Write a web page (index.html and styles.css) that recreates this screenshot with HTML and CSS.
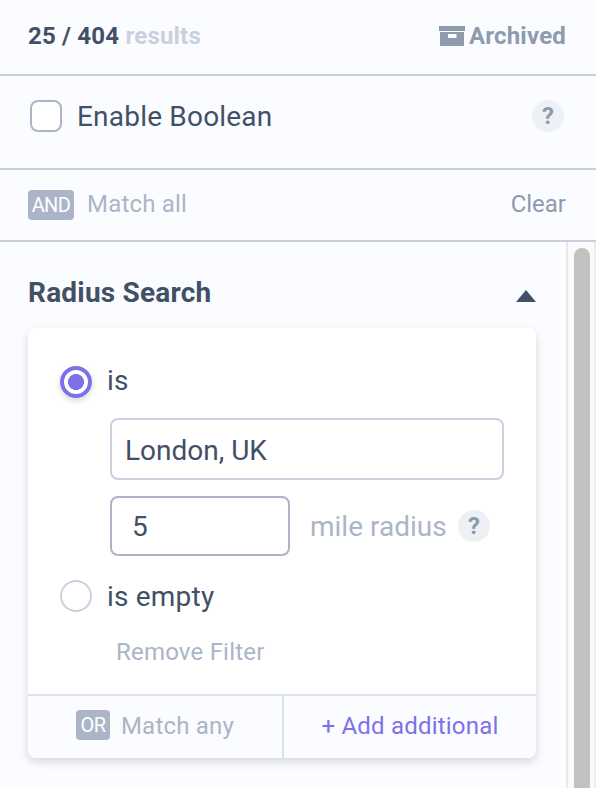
FILE: index.html
```html
<!DOCTYPE html>
<html lang="en">
<head>
    <meta charset="UTF-8">
    <meta name="viewport" content="width=device-width, initial-scale=1.0">
    <title>Radius Search</title>
    <link rel="stylesheet" href="styles.css">
</head>

<body>

    <header class="results-bar">
        <div class="count">25 / 404 <span>results</span></div>
        <div class="archived">
            <svg width="26" height="20" viewBox="0 0 26 20">
                <path d="M0 0h26v5H0z"/>
                <path fill-rule="evenodd" d="M1 6h24v14H1zM9 8v4h8.5V8z"/>
            </svg>
            <span class="archived-text">Archived</span>
        </div>
    </header>

    <section class="boolean-bar">
        <div class="checkbox"></div>
        <div class="label boolean-label">Enable Boolean</div>
        <div class="help">?</div>
    </section>

    <section class="match-bar">
        <div class="badge and">AND</div>
        <div class="match-text">Match all</div>
        <div class="clear">Clear</div>
    </section>

    <main>
        <div class="content">
            <div class="title">
                <h2>Radius Search</h2>
                <svg width="20" height="12" viewBox="0 0 20 12"><path d="M10 0l10 12H0z"/></svg>
            </div>

            <div class="card">
                <div class="filter">
                    <div class="option">
                        <div class="radio checked"></div>
                        <div class="label is">is</div>
                    </div>
                    <div class="input place">London, UK</div>
                    <div class="radius-row">
                        <div class="input miles">5</div>
                        <div class="miles-text">mile radius</div>
                        <div class="help">?</div>
                    </div>
                    <div class="option empty">
                        <div class="radio"></div>
                        <div class="label">is empty</div>
                    </div>
                    <div class="remove">Remove Filter</div>
                </div>
                <div class="card-footer">
                    <div class="any">
                        <div class="badge or">OR</div>
                        <div class="any-text">Match any</div>
                    </div>
                    <div class="add">+ Add additional</div>
                </div>
            </div>
        </div>
        <div class="scrollbar">
            <div class="thumb"></div>
        </div>
    </main>

</body>
</html>
```
FILE: styles.css
```css
* {
    margin: 0;
    padding: 0;
    box-sizing: border-box;
}

body {
    display: flex;
    flex-direction: column;
    height: 788px;
    overflow: hidden;
    background-color: #fbfcff;
    color: #425066;
    font-family: Roboto, "Liberation Sans", sans-serif;
    font-size: 24px;
    letter-spacing: 0.2px;
    white-space: nowrap;
}

.results-bar,
.boolean-bar,
.match-bar {
    display: flex;
    align-items: center;
    flex-shrink: 0;
    border-bottom: 2px solid #c8d0de;
}

/* results */
.results-bar {
    justify-content: space-between;
    height: 76px;
    padding: 0 30px 3px 28px;
    font-weight: bold;
}

.count span {
    color: #c8d1de;
}

.archived {
    display: flex;
    align-items: center;
    gap: 4px;
    color: #8e9aae;
}

.archived svg {
    fill: #8e9aae;
}

/* boolean */
.boolean-bar {
    height: 94px;
    padding: 0 32px 12px 30px;
}

.checkbox {
    width: 32px;
    height: 32px;
    border: 2px solid #abb5c7;
    border-radius: 8px;
    background-color: #fff;
}

.label {
    margin-left: 15px;
    font-size: 28px;
}

.help {
    width: 32px;
    height: 32px;
    border-radius: 50%;
    background-color: #edf1f6;
    color: #8e9aae;
    font-size: 24px;
    font-weight: bold;
    line-height: 32px;
    text-align: center;
}

.boolean-bar .help {
    margin-left: auto;
}

/* match */
.match-bar {
    height: 72px;
    padding: 0 30px 2px 28px;
    color: #abb5c7;
}

.badge {
    height: 30px;
    border-radius: 4px;
    background-color: #abb5c7;
    color: #fff;
    font-size: 20px;
    line-height: 31px;
    letter-spacing: -0.6px;
    text-align: center;
}

.and {
    width: 46px;
    margin-top: 2px;
}

.match-text {
    margin-left: 13px;
}

.clear {
    margin-left: auto;
    color: #8e9aae;
    letter-spacing: 0;
}

/* filters */
main {
    display: flex;
    flex: 1;
}

.content {
    width: 566px;
    padding: 34px 30px 0 28px;
}

.title {
    display: flex;
    justify-content: space-between;
    height: 52px;
}

h2 {
    font-size: 28px;
    line-height: 34px;
}

.title svg {
    margin-top: 14px;
    fill: #425066;
}

.card {
    display: flex;
    flex-direction: column;
    width: 508px;
    height: 430px;
    border-radius: 8px;
    background-color: #fff;
    box-shadow: 0 4px 10px rgba(0, 0, 0, 0.15);
    overflow: hidden;
}

.filter {
    height: 366px;
    padding: 38px 32px 0;
}

.option {
    display: flex;
    align-items: center;
    height: 32px;
}

.radio {
    width: 32px;
    height: 32px;
    border: 2px solid #c8d1de;
    border-radius: 50%;
}

.checked {
    border: 4px solid #7c71e8;
    background: radial-gradient(circle, #7c71e8 7.7px, #fff 8.3px);
    box-shadow: 0 3px 6px rgba(0, 0, 0, 0.15);
}

.is {
    margin-bottom: 4px;
}

.input {
    border: 2px solid #c8d1de;
    border-radius: 8px;
    font-size: 28px;
}

.place {
    width: 394px;
    height: 62px;
    margin: 20px 0 16px 50px;
    padding-left: 13px;
    line-height: 61px;
    letter-spacing: 0;
}

.radius-row {
    display: flex;
    align-items: center;
    margin-left: 50px;
}

.miles {
    width: 180px;
    height: 60px;
    padding-left: 20px;
    border-color: #abb5c7;
    line-height: 57px;
}

.miles-text {
    width: 148px;
    padding-left: 20px;
    box-sizing: content-box;
    color: #abb5c7;
    font-size: 28px;
    letter-spacing: 0;
}

.empty {
    margin-top: 24px;
}

.remove {
    margin: 26px 0 0 56px;
    color: #abb5c7;
    line-height: 28px;
}

.card-footer {
    display: flex;
    height: 64px;
    border-top: 2px solid #dde3ec;
    background-color: #fbfcff;
}

.any,
.add {
    display: flex;
    align-items: center;
    justify-content: center;
}

.any {
    width: 256px;
    padding-bottom: 4px;
    border-right: 2px solid #dde3ec;
    color: #abb5c7;
}

.or {
    width: 34px;
    margin-right: 11px;
}

.any-text {
    margin-top: 2px;
}

.add {
    flex: 1;
    padding-bottom: 3px;
    color: #7c71e8;
}

/* scrollbar */
.scrollbar {
    width: 30px;
    padding: 6px 6px 0;
    border-left: 2px solid #e8e8e8;
    border-right: 2px solid #ededed;
    background-color: #fafafa;
}

.thumb {
    width: 16px;
    height: 560px;
    border-radius: 8px;
    background-color: #c1c1c1;
}
```
